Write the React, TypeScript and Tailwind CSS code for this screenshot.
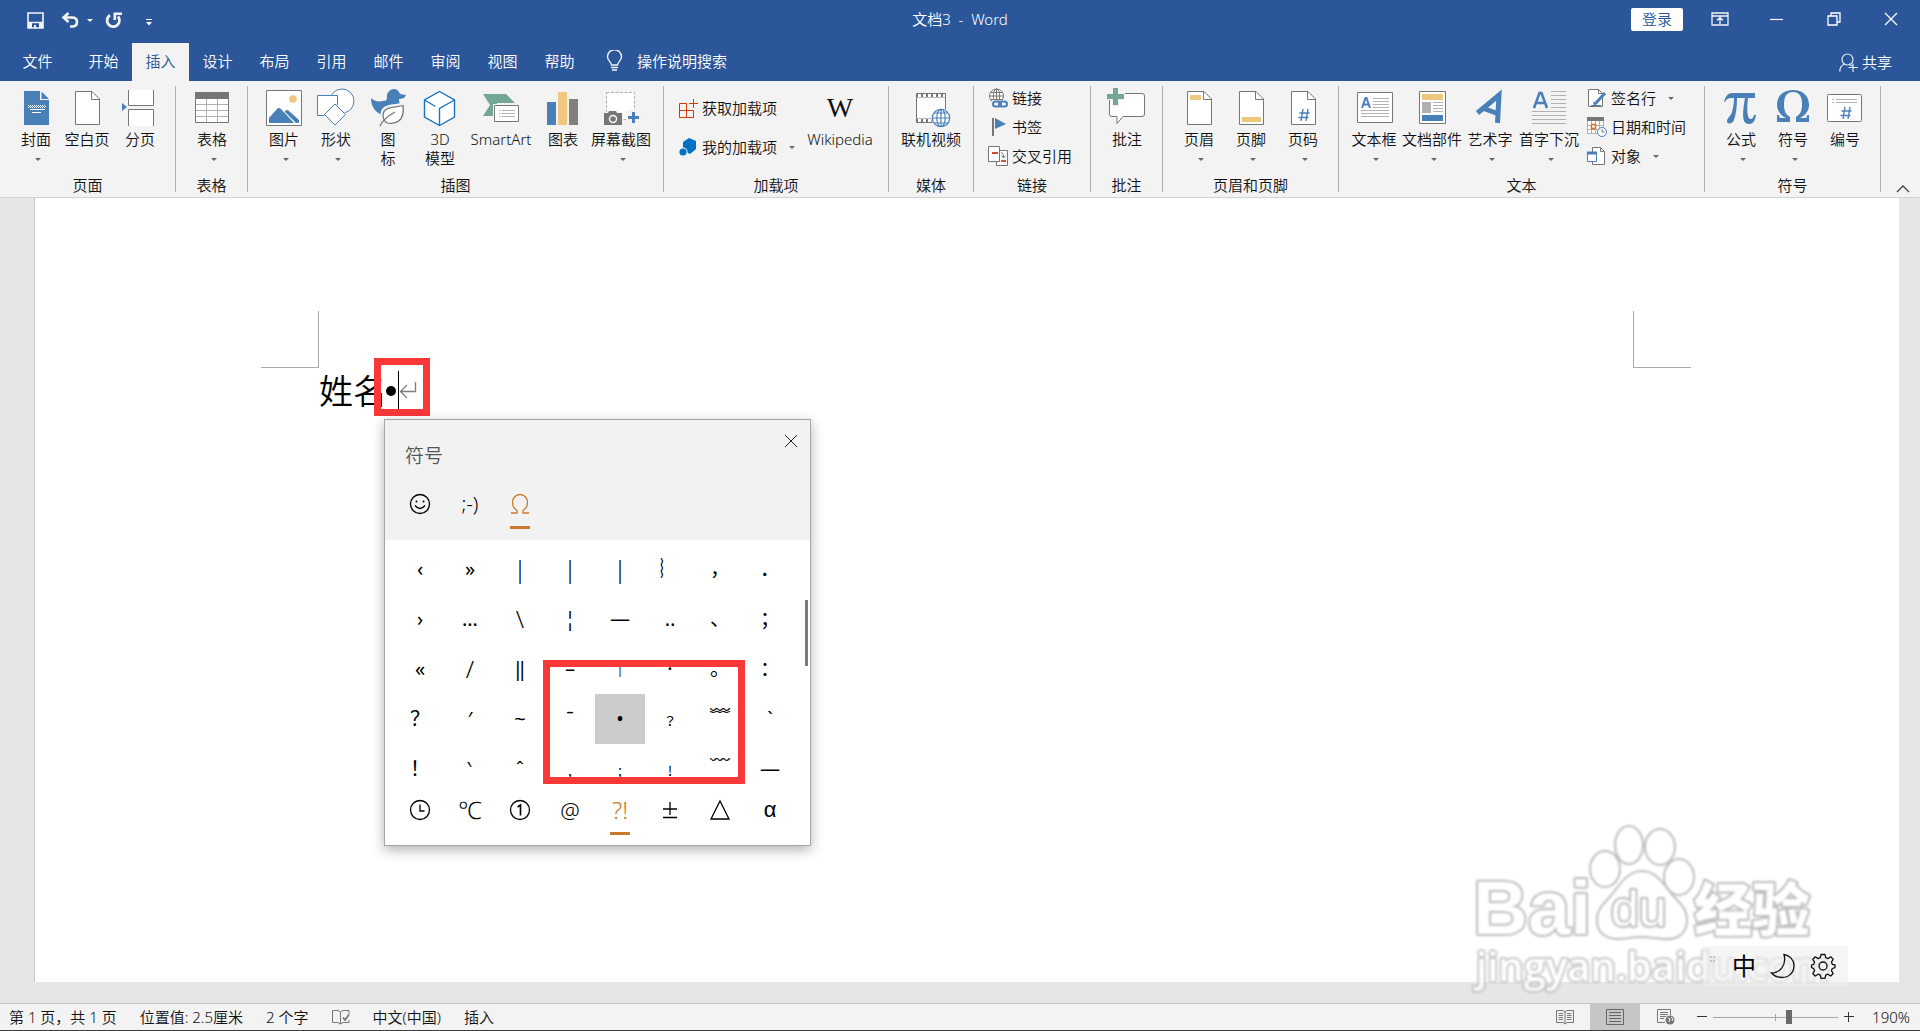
import type { ReactNode } from "react";

const BLUE = "#4a80b8";
const GRAY = "#767676";
const LIGHT = "#b1b1b1";
const GOLD = "#edc87e";

/* ---------- ribbon icons (40 x 40) ---------- */

function Big({ children }: { children: ReactNode }) {
  return (
    <svg width="40" height="40" viewBox="0 0 40 40" fill="none" aria-hidden="true" className="shrink-0">
      {children}
    </svg>
  );
}

function Sheet({ children }: { children?: ReactNode }) {
  return (
    <Big>
      <path d="M8.5 4.5H25l7.5 7.5v25.500H8.500z" fill="#fff" stroke={GRAY} />
      <path d="M24.500 4.500V12.500H32.500" stroke={GRAY} />
      {children}
    </Big>
  );
}

const Cover = () => (
  <Big>
    <path d="M8 4h16v9h9v25H8z" fill={BLUE} />
    <path d="M25.500 4.500v7.500H33z" fill={BLUE} />
    <path d="M12 18.500h17M12 20.500h17" stroke="#fff" strokeDasharray="1 1" />
    <path d="M13 19.500h17" stroke="#fff" strokeDasharray="1 1" />
    <path d="M14 22.500h15M16 25.500h9" stroke="#fff" />
  </Big>
);

const PageBreak = () => (
  <Big>
    <path d="M8.500 3v15.500h25V3" fill="#fff" stroke={GRAY} />
    <path d="M8.500 39V22.500h25V39" fill="#fff" stroke={GRAY} />
    <path d="M2 16l5 4-5 4z" fill={BLUE} />
  </Big>
);

const TableIcon = () => (
  <Big>
    <path d="M3.500 5.500h33v30h-33z" fill="#fff" stroke={GRAY} />
    <path d="M3 5h34v7H3z" fill={GRAY} />
    <path d="M14.500 12v23M25.500 12v23M4 17.500h32M4 23.500h32M4 29.500h32" stroke={LIGHT} />
  </Big>
);

const Picture = () => (
  <Big>
    <path d="M2.500 3.500h35v35h-35z" fill="#fff" stroke={GRAY} />
    <circle cx="29" cy="12" r="3.800" fill={GOLD} />
    <path d="M5 36v-5l8-9q2-2 4 0l13 14z" fill={BLUE} />
    <path d="M21 24q2-2 4 0l10 9v3h-3L21 25z" fill={BLUE} />
  </Big>
);

const Shapes = () => (
  <Big>
    <circle cx="26" cy="14" r="12" fill="#fff" stroke={BLUE} />
    <path d="M1.500 8.500h20v20h-20z" fill="#fff" stroke={BLUE} />
    <path d="M19 15.500L31 27.500 19 39 7.500 27.500z" fill="#f3f3f3" />
    <path d="M19 17L29.500 27.500 19 38 8.500 27.500z" fill="#fff" stroke={BLUE} />
  </Big>
);

const Duck = () => (
  <Big>
    <path
      d="M3 11c3 3 7 4 12 3 3 0 4-1 4-3-1-5 3-9 7-9 3 0 5 2 6 5l6 1c-1 3-4 4-7 4 0 3 1 4 1 8-1 6-6 8-14 8-9 0-15-7-15-17z"
      fill={BLUE}
    />
    <path d="M36 17c-7 3-22-1-22 11 0 3 1 5 3 8 9 3 20 2 19-19z" fill="#fff" stroke="#f3f3f3" strokeWidth="3" />
    <path d="M35 18.500c-6 2-20 0-20 10 0 3 1 5 3 7 10 3 19-2 17-17z" fill="#fff" stroke={GRAY} strokeWidth="1.300" />
    <path d="M12 39c2-5 6-9 15-14" stroke={GRAY} strokeWidth="1.300" />
  </Big>
);

const Cube = () => (
  <Big>
    <path d="M19.500 4.500L34.500 13v17l-15 8.500L4.500 30V13z" fill="#fff" stroke="#1a74bf" strokeWidth="1.400" />
    <path d="M4.500 13l11 6.500M34.500 13l-15 8.500v17" stroke="#1a74bf" strokeWidth="1.400" />
  </Big>
);

const SmartArt = () => (
  <Big>
    <path d="M2 7h23l9 9H16v13H2l7-11z" fill="#74a696" />
    <path d="M12 17h27v19H12z" fill="#f3f3f3" />
    <path d="M13.500 18.500h24v16h-24z" fill="#fff" stroke={GRAY} />
    <path d="M21 23.500h13M21 26.500h13M21 29.500h13M18 23.500h1.500M18 26.500h1.500M18 29.500h1.500" stroke={LIGHT} />
  </Big>
);

const Chart = () => (
  <Big>
    <path d="M4 15h9v23H4z" fill={BLUE} />
    <path d="M15 5h9v33h-9z" fill={GOLD} />
    <path d="M26 12h9v26h-9z" fill="#808080" />
  </Big>
);

const Screenshot = () => (
  <Big>
    <path d="M5.500 5.500h28v27h-28z" fill="#fff" stroke={LIGHT} strokeDasharray="3 1.500" />
    <path d="M2 25h20v14H2zM25 23h14v14H25z" fill="#f3f3f3" />
    <path d="M3 26h4l1-2h7l1 2h5v12H3z" fill={GRAY} />
    <circle cx="12" cy="32" r="3.500" stroke="#fff" strokeWidth="1.400" />
    <path d="M27 30.500h11M32.500 25v11" stroke={BLUE} strokeWidth="3" />
  </Big>
);

const Wiki = () => (
  <Big>
    <text x="20" y="30" textAnchor="middle" fontSize="28" fill="#111" className="font-['Liberation_Serif',serif] font-normal">
      W
    </text>
  </Big>
);

const Video = () => (
  <Big>
    <path d="M5.500 6.500h29v29h-29z" fill="#fff" stroke={GRAY} />
    <path d="M5 8.500h30M5 33.500h30" stroke={GRAY} strokeWidth="4" />
    <path d="M7 8.500h27M7 33.500h27" stroke="#fff" strokeWidth="3" strokeDasharray="3 2" />
    <circle cx="30" cy="31" r="10" fill="#f3f3f3" />
    <g stroke={BLUE} strokeWidth="1.200">
      <circle cx="30" cy="31" r="8.700" fill="#fff" />
      <ellipse cx="30" cy="31" rx="4.200" ry="8.700" />
      <path d="M30 22v18M21 31h18M23 26h14M23 36h14" />
    </g>
  </Big>
);

const Comment = () => (
  <Big>
    <path d="M5 6.500h30q2.500 0 2.500 2.500v18q0 2.500-2.500 2.500H16l-6 7v-7H5q-2.500 0-2.500-2.500V9q0-2.500 2.500-2.500z" fill="#fff" stroke={GRAY} />
    <path d="M-1 6h6V0h7v6h6v7h-6v6H5v-6h-6z" fill="#f3f3f3" />
    <path d="M0 9.500h17M8.500 1v17" stroke="#74a696" strokeWidth="5" />
  </Big>
);

const HeaderIcon = () => (
  <Sheet>
    <path d="M11 8h11v5H11z" fill={GOLD} />
  </Sheet>
);
const FooterIcon = () => (
  <Sheet>
    <path d="M11 30h19v5H11z" fill={GOLD} />
  </Sheet>
);
const PageNumber = () => (
  <Sheet>
    <path d="M20 22l-2 12M25 22l-2 12M16.500 26h10M15.500 30.500h10" stroke={BLUE} strokeWidth="1.400" />
  </Sheet>
);

const TextBox = () => (
  <Big>
    <path d="M3.500 5.500h35v30h-35z" fill="#fff" stroke={GRAY} />
    <path d="M8 21l3.500-10h1L16 21M9.200 17.500h5.600" stroke={BLUE} strokeWidth="2" />
    <path d="M19 11.500h16M19 14.500h16M19 17.500h16M19 20.500h16M7 23.500h28M7 26.500h28M7 29.500h28" stroke={LIGHT} />
  </Big>
);

const QuickParts = () => (
  <Big>
    <path d="M7.500 4.500h26v32h-26z" fill="#fff" stroke={GRAY} />
    <path d="M10 7h21v6H10z" fill={GOLD} />
    <path d="M10 15h9v11h-9z" fill={LIGHT} />
    <path d="M21 15.500h10M21 18.500h10M21 21.500h10M21 24.500h10" stroke={LIGHT} />
    <path d="M10 28h21v6H10z" fill={BLUE} />
  </Big>
);

const WordArt = () => (
  <Big>
    <path d="M7.500 26L29 8l-1.500 28M14 21.500L28.500 27" stroke={BLUE} strokeWidth="5" />
  </Big>
);

const DropCap = () => (
  <Big>
    <path d="M5 21L10.500 6h2L18 21M7 16h9" stroke={BLUE} strokeWidth="2.600" />
    <path d="M22 4.500h15M22 8.500h15M22 12.500h15M22 16.500h15M22 20.500h15M3 24.500h34M3 28.500h34M3 32.500h34M3 36.500h34" stroke={LIGHT} />
  </Big>
);

const Pi = () => (
  <Big>
    <path
      d="M3 15C5 8 7 6 12 6h22v5h-7c-1 8-1 14 0 18 1 4 5 4 6-1h2c-1 6-3 9-7 9-7 0-7-9-4-26h-8c0 9-1 16-3 22-1 4-7 5-7 1 0-3 4-5 5-9 1-4 2-8 2-14-5 0-7 0-9 4z"
      fill={BLUE}
    />
  </Big>
);

const OmegaBig = () => (
  <Big>
    <path
      d="M4 35v-7h2c0 3 1 3 3 3h4C7 28 4 23 4 18 4 9 10 3 20 3s16 6 16 15c0 5-3 10-9 13h4c2 0 3 0 3-3h2v7H23v-5c5-3 6-7 6-13 0-8-3-12-9-12s-9 4-9 12c0 6 1 10 6 13v5z"
      fill={BLUE}
    />
  </Big>
);

const Numbering = () => (
  <Big>
    <rect x="2.500" y="7.500" width="34" height="27" rx="1" fill="#fff" stroke={GRAY} />
    <path d="M7 12.500h2M11 12.500h21M7 15.500h2M11 15.500h21" stroke={LIGHT} />
    <path d="M20 20l-2 12M25 20l-2 12M16.500 24h10M15.500 28.500h10" stroke={BLUE} strokeWidth="1.400" />
  </Big>
);

/* ---------- small icons (20 x 20) ---------- */

function Small({ children }: { children: ReactNode }) {
  return (
    <svg width="20" height="20" viewBox="0 0 20 20" fill="none" aria-hidden="true" className="shrink-0">
      {children}
    </svg>
  );
}

const GetAddins = () => (
  <Small>
    <path d="M1.500 5.500h7v14h-7zM1.500 12.500h14v7h-14M8.500 5.500v14" stroke="#d83b01" />
    <path d="M11 5.500h9M15.500 1v9" stroke="#d83b01" />
  </Small>
);
const MyAddins = () => (
  <Small>
    <path d="M11 1l7 3v8l-6 5-7-4V5z" fill="#0072c6" />
    <circle cx="5" cy="15" r="4.500" fill="#f3f3f3" />
    <circle cx="5" cy="15" r="3.600" fill="#0072c6" />
  </Small>
);
const LinkIcon = () => (
  <Small>
    <g stroke={GRAY}>
      <circle cx="8.500" cy="8" r="7" fill="#fff" />
      <ellipse cx="8.500" cy="8" rx="3.200" ry="7" />
      <path d="M1.500 8h14M2.500 4.500h12M2.500 11.500h12M8.500 1v14" />
    </g>
    <path d="M4 12h16v8H4z" fill="#f3f3f3" />
    <rect x="5" y="13.500" width="8" height="5" rx="2.500" stroke={BLUE} strokeWidth="2" />
    <rect x="11" y="13.500" width="8" height="5" rx="2.500" stroke={BLUE} strokeWidth="2" />
  </Small>
);
const Bookmark = () => (
  <Small>
    <path d="M5 1v18" stroke={GRAY} strokeWidth="2" />
    <path d="M7 1l11 6-11 5z" fill={BLUE} />
  </Small>
);
const CrossRef = () => (
  <Small>
    <path d="M8.500 4.500h11v15h-11z" fill="#fff" stroke={GRAY} />
    <path d="M.5.500h11v15H.5z" fill="#fff" stroke={GRAY} />
    <path d="M4 7h6M13 15h5" stroke="#d35230" strokeWidth="2" />
    <path d="M13 6.500q2.500 0 2.500 5M13.500 9.500l2 2.500 2-2.500" stroke={GRAY} />
  </Small>
);
const Signature = () => (
  <Small>
    <path d="M1.500 1.500h10l4 4v13h-14z" fill="#fff" stroke={GRAY} />
    <path d="M11.500 1.500v4h4" stroke={GRAY} />
    <path d="M18 5l-9 10-2.500 1" stroke={BLUE} strokeWidth="3" />
    <path d="M4 17.500h10" stroke={BLUE} />
  </Small>
);
const DateTime = () => (
  <Small>
    <path d="M.5.500h16v16H.5z" fill="#fff" stroke={LIGHT} />
    <path d="M0 0h17v4H0z" fill={GRAY} />
    <path d="M1 8.500h15M1 12.500h15M4.500 4v12M8.500 4v12M12.500 4v12" stroke={LIGHT} />
    <path d="M4.500 7.500h4v4h-4z" fill="#fff" stroke="#e06c1f" strokeWidth="1.500" />
    <circle cx="15" cy="15" r="4.500" fill="#fff" stroke={BLUE} />
    <path d="M15 12v3h2.500" stroke={GRAY} />
  </Small>
);
const ObjectIcon = () => (
  <Small>
    <path d="M5.500 1.500h8l4 4v13h-12z" fill="#fff" stroke={GRAY} />
    <path d="M13.500 1.500v4h4" stroke={GRAY} />
    <path d="M.5 6.500h9v9h-9z" fill="#fff" stroke={BLUE} />
    <path d="M0 7h10" stroke={BLUE} strokeWidth="3" />
  </Small>
);

/* ---------- ribbon building blocks ---------- */

function Caret({ className = "" }: { className?: string }) {
  return (
    <svg width="6" height="3" viewBox="0 0 6 3" aria-hidden="true" className={className}>
      <path d="M0 0h6L3 3z" fill="#666" />
    </svg>
  );
}

function RibbonButton({ icon, label, width, menu = false }: { icon: ReactNode; label: string[]; width: string; menu?: boolean }) {
  return (
    <button className={`flex shrink-0 flex-col items-center ${width}`}>
      {icon}
      <span className="mt-[3px] flex flex-col items-center leading-[19px] whitespace-nowrap">
        {label.map((line) => (
          <span key={line}>{line}</span>
        ))}
      </span>
      {menu && (
        <span className="flex h-[20px] items-center pl-1">
          <Caret />
        </span>
      )}
    </button>
  );
}

function RowButton({ icon, label, menu = false }: { icon: ReactNode; label: string; menu?: boolean }) {
  return (
    <button className="flex items-center gap-1 whitespace-nowrap">
      {icon}
      <span className="leading-5">{label}</span>
      {menu && <Caret className="ml-2" />}
    </button>
  );
}

function Group({ title, width, pad = "pl-[10px]", children }: { title: string; width: string; pad?: string; children: ReactNode }) {
  return (
    <section aria-label={title} className={`my-[5px] flex shrink-0 flex-col justify-between border-r border-[#b1b1b1] ${width}`}>
      <div className={`flex h-[88px] pt-px ${pad}`}>{children}</div>
      <div className="text-center leading-[14px]">{title}</div>
    </section>
  );
}

function Ribbon() {
  return (
    <div className="flex h-[117px] border-b border-[#d2d2d2] bg-[#f3f3f3] text-[15px] text-[#111]">
      <Group title="页面" width="w-[176px]">
        <RibbonButton width="w-[52px]" icon={<Cover />} label={["封面"]} menu />
        <RibbonButton width="w-[50px]" icon={<Sheet />} label={["空白页"]} />
        <RibbonButton width="w-[56px]" icon={<PageBreak />} label={["分页"]} />
      </Group>
      <Group title="表格" width="w-[72px]">
        <RibbonButton width="w-[52px]" icon={<TableIcon />} label={["表格"]} menu />
      </Group>
      <Group title="插图" width="w-[416px]">
        <RibbonButton width="w-[52px]" icon={<Picture />} label={["图片"]} menu />
        <RibbonButton width="w-[52px]" icon={<Shapes />} label={["形状"]} menu />
        <RibbonButton width="w-[52px]" icon={<Duck />} label={["图", "标"]} />
        <RibbonButton width="w-[52px]" icon={<Cube />} label={["3D", "模型"]} />
        <RibbonButton width="w-[70px]" icon={<SmartArt />} label={["SmartArt"]} />
        <RibbonButton width="w-[54px]" icon={<Chart />} label={["图表"]} />
        <RibbonButton width="w-[62px]" icon={<Screenshot />} label={["屏幕截图"]} menu />
      </Group>
      <Group title="加载项" width="w-[225px]" pad="pl-[14px]">
        <div className="flex w-[122px] shrink-0 flex-col gap-[19px] pt-[11px]">
          <RowButton icon={<GetAddins />} label="获取加载项" />
          <RowButton icon={<MyAddins />} label="我的加载项" menu />
        </div>
        <RibbonButton width="w-[80px]" icon={<Wiki />} label={["Wikipedia"]} />
      </Group>
      <Group title="媒体" width="w-[85px]">
        <RibbonButton width="w-[64px]" icon={<Video />} label={["联机视频"]} />
      </Group>
      <Group title="链接" width="w-[117px]" pad="pl-[14px]">
        <div className="flex flex-col gap-[9px] pt-px">
          <RowButton icon={<LinkIcon />} label="链接" />
          <RowButton icon={<Bookmark />} label="书签" />
          <RowButton icon={<CrossRef />} label="交叉引用" />
        </div>
      </Group>
      <Group title="批注" width="w-[72px]">
        <RibbonButton width="w-[52px]" icon={<Comment />} label={["批注"]} />
      </Group>
      <Group title="页眉和页脚" width="w-[176px]">
        <RibbonButton width="w-[52px]" icon={<HeaderIcon />} label={["页眉"]} menu />
        <RibbonButton width="w-[52px]" icon={<FooterIcon />} label={["页脚"]} menu />
        <RibbonButton width="w-[52px]" icon={<PageNumber />} label={["页码"]} menu />
      </Group>
      <Group title="文本" width="w-[366px]">
        <RibbonButton width="w-[50px]" icon={<TextBox />} label={["文本框"]} menu />
        <RibbonButton width="w-[66px]" icon={<QuickParts />} label={["文档部件"]} menu />
        <RibbonButton width="w-[50px]" icon={<WordArt />} label={["艺术字"]} menu />
        <RibbonButton width="w-[68px]" icon={<DropCap />} label={["首字下沉"]} menu />
        <div className="ml-1 flex flex-col gap-[9px] pt-px">
          <RowButton icon={<Signature />} label="签名行" menu />
          <RowButton icon={<DateTime />} label="日期和时间" />
          <RowButton icon={<ObjectIcon />} label="对象" menu />
        </div>
      </Group>
      <Group title="符号" width="w-[176px]">
        <RibbonButton width="w-[52px]" icon={<Pi />} label={["公式"]} menu />
        <RibbonButton width="w-[52px]" icon={<OmegaBig />} label={["符号"]} menu />
        <RibbonButton width="w-[52px]" icon={<Numbering />} label={["编号"]} />
      </Group>
      <button aria-label="折叠功能区" className="flex flex-1 items-end justify-center pb-1 pl-1">
        <svg width="14" height="8" viewBox="0 0 14 8" fill="none" aria-hidden="true">
          <path d="M1 7l6-6 6 6" stroke="#444" strokeWidth="1.300" />
        </svg>
      </button>
    </div>
  );
}

/* ---------- title bar and tabs ---------- */

function TitleBar() {
  return (
    <header className="grid h-[43px] grid-cols-[1fr_auto_1fr] text-[15px] text-white">
      <div className="flex h-10 items-center pl-[27px]">
        <button aria-label="保存">
          <svg width="17" height="17" viewBox="0 0 17 17" fill="none" aria-hidden="true">
            <path d="M1 1h15v15H1z" stroke="#f3f3f3" strokeWidth="1.600" />
            <path d="M1 10.500h15" stroke="#f3f3f3" strokeWidth="1.400" />
            <path d="M1 11h4v5H1zM12 11h4v5h-4zM7 13h2v3H7z" fill="#f3f3f3" />
          </svg>
        </button>
        <button aria-label="撤消" className="ml-[17px]">
          <svg width="18" height="16" viewBox="0 0 18 16" fill="none" aria-hidden="true">
            <path d="M2 5.500h9q5 0 5 4.500t-5 4.500H9" stroke="#f3f3f3" strokeWidth="2.600" />
            <path d="M7.500 1L2.500 5.500l5 4.500" stroke="#f3f3f3" strokeWidth="2.600" />
          </svg>
        </button>
        <button aria-label="撤消选项" className="ml-2">
          <svg width="6" height="3" viewBox="0 0 6 3" aria-hidden="true">
            <path d="M0 0h6L3 3z" fill="#fff" />
          </svg>
        </button>
        <button aria-label="重复" className="ml-3">
          <svg width="17" height="17" viewBox="0 0 17 17" fill="none" aria-hidden="true">
            <path d="M5 3.200A6.200 6.200 0 1 0 13 4.500" stroke="#f3f3f3" strokeWidth="2.800" />
            <path d="M9.800 8V1.700H17" stroke="#f3f3f3" strokeWidth="2.600" />
          </svg>
        </button>
        <button aria-label="自定义快速访问工具栏" className="mt-1 ml-6">
          <svg width="6" height="7" viewBox="0 0 6 7" aria-hidden="true">
            <path d="M0 0h6v1H0zM0 3h6L3 6.500z" fill="#fff" />
          </svg>
        </button>
      </div>
      <h1 className="text-center leading-[38px] whitespace-pre">{"文档3  -  Word"}</h1>
      <div className="flex h-[38px] items-center justify-end pr-[22px]">
        <button className="mr-[28px] h-[23px] w-[52px] rounded-xs bg-white leading-[23px] text-[#2b579a]">登录</button>
        <button aria-label="功能区显示选项" className="mr-[41px]">
          <svg width="18" height="14" viewBox="0 0 18 14" fill="none" stroke="#f3f3f3" aria-hidden="true">
            <path d="M1 1h16v12H1zM1 4h16M9 12V6M6 8.500L9 5.500l3 3" strokeWidth="1.300" />
          </svg>
        </button>
        <button aria-label="最小化" className="mr-[43px]">
          <svg width="14" height="14" viewBox="0 0 14 14" fill="none" stroke="#fff" aria-hidden="true">
            <path d="M0 7.500h13" strokeWidth="1.200" />
          </svg>
        </button>
        <button aria-label="还原" className="mr-[42px]">
          <svg width="15" height="14" viewBox="0 0 15 14" fill="none" stroke="#fff" aria-hidden="true">
            <path d="M1 4h9v9H1zM4 4V1h9v9h-3" strokeWidth="1.300" />
          </svg>
        </button>
        <button aria-label="关闭">
          <svg width="14" height="14" viewBox="0 0 14 14" fill="none" stroke="#fff" aria-hidden="true">
            <path d="M1 1l12 12M13 1L1 13" strokeWidth="1.300" />
          </svg>
        </button>
      </div>
    </header>
  );
}

const TABS = ["开始", "插入", "设计", "布局", "引用", "邮件", "审阅", "视图", "帮助"];

function Tabs() {
  return (
    <nav className="flex h-[38px] items-stretch text-[15px] text-white">
      <button className="w-[75px] pb-0.5">文件</button>
      {TABS.map((tab) => (
        <button key={tab} className={tab === "插入" ? "w-[57px] bg-[#f3f3f3] pb-0.5 text-[#2b579a]" : "w-[57px] pb-0.5"}>
          {tab}
        </button>
      ))}
      <button className="ml-[18px] flex items-center gap-[14px] pb-0.5">
        <svg width="17" height="22" viewBox="0 0 17 22" fill="none" stroke="#f3f3f3" aria-hidden="true">
          <path d="M5.500 15c0-3-4-4-4-8.200a6.800 6.800 0 0 1 14 0c0 4.200-4 5.200-4 8.200z" strokeWidth="1.400" />
          <path d="M5 17.500h7M6 20h5" strokeWidth="1.600" />
        </svg>
        操作说明搜索
      </button>
      <button className="mr-7 ml-auto flex items-center gap-1">
        <svg width="19" height="19" viewBox="0 0 19 19" fill="none" stroke="#e8edf5" aria-hidden="true">
          <circle cx="8.500" cy="6.500" r="5.500" strokeWidth="1.200" />
          <path d="M.8 18.500c0-4 2-6.500 5-7.500M14 10.500v8.500M9.500 14.500H19M10 11l3 2" strokeWidth="1.200" />
        </svg>
        共享
      </button>
    </nav>
  );
}

/* ---------- symbol panel ---------- */

const SYMBOLS = [
  ["‹", "»", "|", "|", "|", "︴", "，", "．"],
  ["›", "…", "\\", "¦", "—", "‥", "、", "；"],
  ["«", "/", "‖", "–", "︱", "·", "。", "："],
  ["？", "′", "~", "ˉ", "•", "﹖", "﹌", "ˋ"],
  ["！", "‵", "ˆ", "﹐", "﹔", "﹗", "﹋", "―"],
];

function symbolClass(s: string) {
  if (s === "•") return "h-[50px] bg-[#cccccc]";
  if ("|\\/".includes(s)) return "h-[50px] text-2xl font-[350]";
  if ("﹐﹔﹗﹖".includes(s)) return "h-[50px] text-base";
  return "h-[50px]";
}

function Underlined({ active = false, label, children }: { active?: boolean; label: string; children: ReactNode }) {
  return (
    <button aria-label={label} className={active ? "flex w-[50px] flex-col items-center text-[#ca7a2c]" : "flex w-[50px] flex-col items-center text-black"}>
      <span className="flex h-6 items-center justify-center">{children}</span>
      <span className={active ? "mt-[10px] h-[3px] w-5 bg-[#ca7a2c]" : "mt-[10px] h-[3px] w-5"} />
    </button>
  );
}

function Icon22({ children }: { children: ReactNode }) {
  return (
    <svg width="22" height="22" viewBox="0 0 22 22" fill="none" stroke="currentColor" strokeWidth="1.300" aria-hidden="true">
      {children}
    </svg>
  );
}

function SymbolPanel() {
  return (
    <aside className="absolute top-[221px] left-[384px] flex h-[427px] w-[427px] flex-col border border-[#a6a6a6] bg-white shadow-[0_4px_12px_rgba(0,0,0,0.3)]">
      <div className="h-[120px] bg-[#f2f2f2] pl-[10px]">
        <div className="flex items-start justify-between pt-[14px] pr-[12px] pl-[10px]">
          <h2 className="mt-2 text-[19px] leading-7 text-[#555]">符号</h2>
          <button aria-label="关闭符号面板">
            <svg width="14" height="14" viewBox="0 0 14 14" fill="none" stroke="#222" aria-hidden="true">
              <path d="M1 1l12 12M13 1L1 13" />
            </svg>
          </button>
        </div>
        <div className="mt-[22px] flex">
          <Underlined label="表情符号">
            <Icon22>
              <circle cx="11" cy="11" r="9.500" />
              <circle cx="7.500" cy="8.500" r="1" fill="currentColor" stroke="none" />
              <circle cx="14.500" cy="8.500" r="1" fill="currentColor" stroke="none" />
              <path d="M6 12.500q5 6 10 0" />
            </Icon22>
          </Underlined>
          <Underlined label="颜文字">
            <span className="text-xl leading-6">;-)</span>
          </Underlined>
          <Underlined label="符号" active>
            <Icon22>
              <path d="M2 20h6v-2.500C5 15.500 3.500 13 3.500 9.500 3.500 5 6.500 1.500 11 1.500s7.500 3.500 7.500 8c0 3.500-1.500 6-4.500 8V20h6" />
            </Icon22>
          </Underlined>
        </div>
      </div>
      <div className="grid h-[246px] grid-cols-[repeat(8,50px)] content-start overflow-hidden pt-1 pl-[10px] text-xl font-normal text-black">
        {SYMBOLS.flatMap((row, r) =>
          row.map((s, c) => (
            <button key={`${r}-${c}`} className={symbolClass(s)}>
              {s}
            </button>
          )),
        )}
      </div>
      <div className="mt-3 flex pl-[10px]">
        <Underlined label="最近使用">
          <Icon22>
            <circle cx="11" cy="11" r="9.500" />
            <path d="M11 5.500V12h4.500" />
          </Icon22>
        </Underlined>
        <Underlined label="单位">
          <span className="text-2xl leading-6 font-light">℃</span>
        </Underlined>
        <Underlined label="编号">
          <Icon22>
            <circle cx="11" cy="11" r="9.500" />
            <path d="M8.500 8l3-2v10.500" strokeWidth="1.600" />
          </Icon22>
        </Underlined>
        <Underlined label="常用">
          <span className="text-[22px] leading-6 font-light">@</span>
        </Underlined>
        <Underlined label="标点" active>
          <span className="text-2xl leading-6 font-light">?!</span>
        </Underlined>
        <Underlined label="数学">
          <Icon22>
            <path d="M4 10h14M11 3v13M4 18.500h14" />
          </Icon22>
        </Underlined>
        <Underlined label="几何">
          <Icon22>
            <path d="M11 2l9 18H2z" />
          </Icon22>
        </Underlined>
        <Underlined label="希腊字母">
          <span className="font-['Liberation_Sans',sans-serif] text-[22px] leading-6">α</span>
        </Underlined>
      </div>
      <div className="absolute top-[180px] right-[2px] h-[66px] w-[3px] bg-[#7a7a7a]" />
    </aside>
  );
}

/* ---------- watermark and input bar ---------- */

function Watermark() {
  return (
    <svg
      width="360"
      height="180"
      viewBox="0 0 360 180"
      className="pointer-events-none absolute right-[90px] bottom-[7px] blur-[1px]"
      fill="#fff"
      stroke="#bdbdbd"
      strokeWidth="4"
      strokeLinejoin="round"
      paintOrder="stroke"
      aria-label="Baidu 经验 jingyan.baidu.com"
    >
      <text x="3" y="118" fontSize="76" fontWeight="700" className="font-['Liberation_Sans',sans-serif]">
        Bai
      </text>
      <ellipse cx="135" cy="53" rx="14" ry="17" />
      <ellipse cx="159" cy="29" rx="13" ry="18" />
      <ellipse cx="190" cy="31" rx="14" ry="17" />
      <ellipse cx="209" cy="61" rx="14" ry="17" />
      <path d="M172 56c14 0 22 14 30 24 8 9 14 13 14 24 0 14-10 19-22 18-10-1-16-2-24-2s-14 2-22 2c-12 0-20-6-20-18 0-11 6-15 14-24 8-10 16-24 30-24z" />
      <text x="141" y="110" fontSize="50" className="font-['Liberation_Sans',sans-serif] font-normal">
        du
      </text>
      <text x="224" y="115" fontSize="58" fontWeight="900" className="font-['Noto_Sans_CJK_SC',sans-serif]">
        经验
      </text>
      <text x="6" y="165" fontSize="40" fontWeight="600" opacity="0.8" className="font-['Open_Sans',sans-serif]">
        jingyan.baidu.com
      </text>
    </svg>
  );
}

function InputBar() {
  return (
    <div className="absolute right-[72px] bottom-[17px] flex h-10 w-[145px] items-center bg-[#eeeeee]/60 pl-[7px]">
      <svg width="6" height="20" viewBox="0 0 6 20" aria-hidden="true">
        <path d="M1 0v2M4 0v2M1 4v2M4 4v2" stroke="#999" />
      </svg>
      <button className="ml-4 text-2xl leading-10 font-normal text-black">中</button>
      <button aria-label="半角" className="ml-[14px]">
        <svg width="26" height="26" viewBox="0 0 26 26" fill="none" stroke="#111" strokeWidth="1.300" aria-hidden="true">
          <path d="M14 1.500c6 1 10 5.500 10 11 0 7-5 12-12 12-5 0-8-1.500-10.500-4.500C9 20 17 13 14 1.500z" />
        </svg>
      </button>
      <button aria-label="设置" className="ml-[14px]">
        <svg width="26" height="26" viewBox="0 0 26 26" fill="none" stroke="#111" strokeWidth="1.300" strokeLinejoin="round" aria-hidden="true">
          <path d="M11 1.500h4l.7 3.200 2.200.9 2.800-1.800 2.500 2.500-1.800 2.800.9 2.200 2.700.7v2.600l-2.700.9-.9 2.200 1.800 2.800-2.500 2.500-2.800-1.800-2.200.9-.7 3.200h-4l-.7-3.200-2.200-.9-2.800 1.800-2.500-2.500 1.800-2.800-.9-2.200L1.500 14.600V12l2.200-.7.9-2.200-1.800-2.800 2.500-2.500 2.800 1.800 2.200-.9z" />
          <circle cx="13" cy="13" r="4" />
        </svg>
      </button>
    </div>
  );
}

/* ---------- document ---------- */

function Document() {
  return (
    <main className="relative flex flex-1 flex-col bg-[#e6e6e6] pr-[21px] pb-[21px] pl-[34px]">
      <article className="flex-1 border-l border-[#c6c6c6] bg-white pt-[113px] pr-[208px] pl-[226px]">
        <div className="flex justify-between">
          <div className="h-[57px] w-[58px] border-r border-b border-[#ababab]" />
          <div className="h-[57px] w-[58px] border-b border-l border-[#ababab]" />
        </div>
        <p className="flex items-center pl-[58px] text-[34px] leading-[46px] text-black">
          姓名
          <span className="ml-[-1px] size-[10px] rounded-full bg-black" />
          <span className="ml-[2px] h-10 w-px bg-black" />
          <svg width="18" height="18" viewBox="0 0 18 18" fill="none" stroke="#7f7f7f" aria-hidden="true">
            <path d="M16.500 0v9.500H1M8 3L1.500 9.500 8 16" strokeWidth="1.300" />
          </svg>
        </p>
      </article>
      <div className="absolute top-[160px] left-[374px] h-[58px] w-14 border-[7px] border-[#fb3838]" />
      <SymbolPanel />
      <div className="absolute top-[462px] left-[543px] h-[124px] w-[202px] border-[7px] border-[#fb3838]" />
      <Watermark />
      <InputBar />
    </main>
  );
}

/* ---------- status bar ---------- */

function StatusBar() {
  return (
    <footer className="flex h-7 items-stretch border-t border-b border-t-[#c6c6c6] border-b-[#3c3c3c] bg-[#f3f3f3] text-[15px] leading-[26px] text-[#111]">
      <div className="flex items-center gap-[23px] pl-[9px] whitespace-pre">
        <button>第 1 页，共 1 页</button>
        <button>位置值: 2.5厘米</button>
        <button>2 个字</button>
        <button aria-label="校对">
          <svg width="18" height="16" viewBox="0 0 18 16" fill="none" stroke="#777" aria-hidden="true">
            <path d="M17 5V1.500H11L8.500 3 6 1.500H.5v12H6L8.500 15 11 13.500h6V11M8.500 3v12" />
            <path d="M11 8.500l2 2.500 4-5.500" strokeWidth="1.800" />
          </svg>
        </button>
        <button>中文(中国)</button>
        <button>插入</button>
      </div>
      <div className="ml-auto flex items-center pr-[10px]">
        <button aria-label="阅读视图" className="mr-4">
          <svg width="18" height="15" viewBox="0 0 18 15" fill="none" stroke="#777" aria-hidden="true">
            <path d="M9 2L7 .5H.5v12H7L9 14l2-1.500h6.500V.5H11zv12M2.500 3.500H7M2.500 5.500H7M2.500 7.500H7M2.500 9.500H7M11 3.500h4.500M11 5.500h4.500M11 7.500h4.500M11 9.500h4.500" />
          </svg>
        </button>
        <button aria-label="页面视图" className="flex w-[50px] items-center justify-center self-stretch bg-[#c6c6c6]">
          <svg width="18" height="16" viewBox="0 0 18 16" fill="none" stroke="#666" aria-hidden="true">
            <path d="M.5.500h17v15H.5zM3 3.500h12M3 6.500h12M3 9.500h12M3 12.500h12" />
          </svg>
        </button>
        <button aria-label="Web 版式视图" className="ml-[17px]">
          <svg width="18" height="16" viewBox="0 0 18 16" fill="none" stroke="#777" aria-hidden="true">
            <path d="M8 13.500H.5V.5h13V6M3 3.500h8M3 5.500h8M3 7.500h6M3 9.500h4" />
            <circle cx="13" cy="11" r="4.500" fill="#777" stroke="none" />
            <path d="M11 9l2 1-1 3M14 8l2 2-1 2" stroke="#f3f3f3" />
          </svg>
        </button>
        <button aria-label="缩小" className="ml-[22px]">
          <svg width="10" height="10" viewBox="0 0 10 10" stroke="#333" aria-hidden="true">
            <path d="M0 4.500h10" />
          </svg>
        </button>
        <span className="mx-[6px] flex h-full w-[125px] items-center bg-[linear-gradient(#a6a6a6,#a6a6a6)] bg-[length:1px_7px] bg-center bg-no-repeat">
          <input
            type="range"
            aria-label="显示比例"
            min={10}
            max={500}
            defaultValue={310}
            className="w-full appearance-none bg-transparent [&::-webkit-slider-runnable-track]:h-px [&::-webkit-slider-runnable-track]:bg-[#a6a6a6] [&::-webkit-slider-thumb]:-mt-[7px] [&::-webkit-slider-thumb]:h-[14px] [&::-webkit-slider-thumb]:w-[6px] [&::-webkit-slider-thumb]:appearance-none [&::-webkit-slider-thumb]:bg-[#6a6a6a]"
          />
        </span>
        <button aria-label="放大">
          <svg width="10" height="10" viewBox="0 0 10 10" stroke="#333" aria-hidden="true">
            <path d="M0 4.500h10M4.500 0v10" />
          </svg>
        </button>
        <button className="w-[56px] text-right">190%</button>
      </div>
    </footer>
  );
}

export default function App() {
  return (
    <div className="flex min-h-screen flex-col bg-[#2b579a] font-['Noto_Sans','Noto_Sans_CJK_SC',sans-serif] font-[350]">
      <TitleBar />
      <Tabs />
      <Ribbon />
      <Document />
      <StatusBar />
    </div>
  );
}
